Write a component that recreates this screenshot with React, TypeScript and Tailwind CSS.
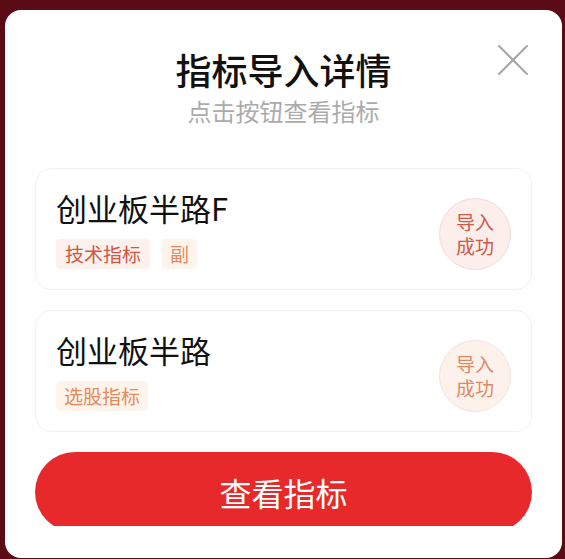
type Tag = { label: string; tone: "red" | "orange" }

const items: { name: string; tags: Tag[]; tone: "red" | "orange" }[] = [
  {
    name: "创业板半路F",
    tags: [
      { label: "技术指标", tone: "red" },
      { label: "副", tone: "orange" },
    ],
    tone: "red",
  },
  {
    name: "创业板半路",
    tags: [{ label: "选股指标", tone: "orange" }],
    tone: "orange",
  },
]

function IndicatorCard({ name, tags, tone }: (typeof items)[number]) {
  return (
    <div className="flex h-[122px] items-start justify-between rounded-[16px] border border-[#f1f1f1] bg-white pl-[20px] pr-[20px] pt-[19px]">
      <div className="flex flex-col">
        <h3 className="text-[31px] leading-[40px] text-[#111]">{name}</h3>
        <div className="mt-[11px] flex gap-[12px]">
          {tags.map((t) => (
            <span
              key={t.label}
              className={
                t.tone === "red"
                  ? "h-[30px] rounded-[4px] bg-[#fdf1ee] px-[9px] text-[19px] leading-[30px] text-[#d2573f]"
                  : "h-[30px] rounded-[4px] bg-[#fff4ec] px-[8px] text-[19px] leading-[30px] text-[#e38a60]"
              }
            >
              {t.label}
            </span>
          ))}
        </div>
      </div>
      <div
        className={
          tone === "red"
            ? "mt-[10px] flex h-[72px] w-[72px] items-center justify-center rounded-full border border-[#f0dcd7] bg-[#fbeeeb] text-[#d2584a]"
            : "mt-[10px] flex h-[72px] w-[72px] items-center justify-center rounded-full border border-[#f5e3d8] bg-[#fdf2eb] text-[#de8a68]"
        }
      >
        <p className="text-center text-[19px] leading-[24px]">
          导入
          <br />
          成功
        </p>
      </div>
    </div>
  )
}

export default function App() {
  return (
    <div
      className="h-[559px] w-[565px] overflow-hidden bg-[#5b0b16] pl-[5px] pt-[10px]"
      style={{ fontFamily: '"Noto Sans CJK SC", "Noto Sans", sans-serif' }}
    >
      <div className="relative h-[548px] w-[557px] rounded-[16px] bg-white">
        <button className="absolute right-[34px] top-[35px]">
          <svg width="30" height="30" viewBox="0 0 30 30" fill="none" stroke="#a6a6a6" strokeWidth="2" strokeLinecap="round">
            <path d="M1 1 29 29M29 1 1 29" />
          </svg>
        </button>

        <div className="flex flex-col items-center pt-[37px]">
          <h2 className="text-[36px] font-medium leading-[44px] text-[#111]">指标导入详情</h2>
          <p className="mt-[5px] text-[24px] leading-[30px] text-[#ababab]">点击按钮查看指标</p>
        </div>

        <div className="mt-[42px] flex flex-col gap-[20px] px-[30px]">
          {items.map((it) => (
            <IndicatorCard key={it.name} {...it} />
          ))}
          <div className="h-[74px] overflow-hidden">
            <button className="h-[80px] w-full rounded-full bg-[#e7292b] text-[32px] leading-[80px] text-white">
              查看指标
            </button>
          </div>
        </div>
      </div>
    </div>
  )
}
